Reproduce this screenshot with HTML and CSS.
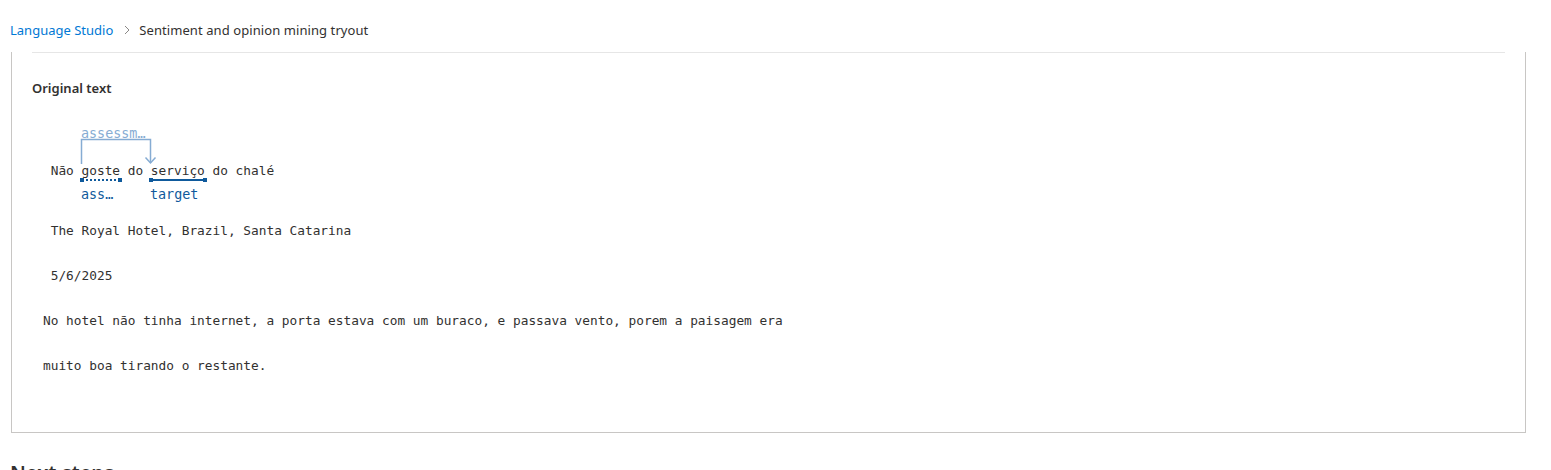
FILE: index.html
```html
<!DOCTYPE html>
<html lang="pt">
<head>
<meta charset="utf-8">
<title>Sentiment and opinion mining tryout</title>
<link rel="stylesheet" href="styles.css">
</head>
<body>
  <nav class="breadcrumb">
    <a class="crumb-link" href="#">Language Studio</a>
    <svg class="crumb-sep" width="12" height="12" viewBox="0 0 12 12"><path d="M4 2 L8 6 L4 10" fill="none" stroke="#8a8886" stroke-width="1"/></svg>
    <span class="crumb-current">Sentiment and opinion mining tryout</span>
  </nav>

  <section class="result-box">
    <div class="rule"></div>
    <h3 class="section-title">Original text</h3>
    <div class="text-block">
      <div class="annot-row">
        <span class="annot-top">assessm…</span>
        <svg class="annot-svg" width="200" height="88" viewBox="0 0 200 88">
          <path d="M38.5 44 V19.5 H107.5 V43" fill="none" stroke="#86acd3" stroke-width="1.5"/>
          <path d="M102.5 37.5 L107.5 43 L112.5 37.5" fill="none" stroke="#86acd3" stroke-width="1.5"/>
          <line x1="39" y1="60" x2="77" y2="60" stroke="#0f5a9c" stroke-width="2" stroke-dasharray="2 2"/>
          <rect x="37" y="58" width="4" height="4" fill="#0f5a9c"/>
          <rect x="75" y="58" width="4" height="4" fill="#0f5a9c"/>
          <line x1="108" y1="60" x2="162" y2="60" stroke="#0f5a9c" stroke-width="2"/>
          <rect x="106" y="58" width="4" height="4" fill="#0f5a9c"/>
          <rect x="160" y="58" width="4" height="4" fill="#0f5a9c"/>
        </svg>
        <div class="mono-line"> Não goste do serviço do chalé</div>
        <span class="annot-bottom label-a">ass…</span>
        <span class="annot-bottom label-b">target</span>
      </div>
      <div class="mono-line plain"> The Royal Hotel, Brazil, Santa Catarina</div>
      <div class="mono-line plain"> 5/6/2025</div>
      <div class="mono-line plain">No hotel não tinha internet, a porta estava com um buraco, e passava vento, porem a paisagem era</div>
      <div class="mono-line plain">muito boa tirando o restante.</div>
    </div>
  </section>

  <h2 class="next-title">Next steps</h2>
</body>
</html>
```

FILE: styles.css
```css
html, body {
  margin: 0;
  padding: 0;
  background: #ffffff;
  overflow: hidden;
}
body {
  font-family: "Noto Sans", "Open Sans", sans-serif;
  color: #323130;
  width: 1551px;
  height: 470px;
}
.breadcrumb {
  display: flex;
  align-items: center;
  height: 20px;
  padding: 20px 0 8px 10px;
  font-size: 13px;
}
.crumb-link {
  color: #0078d4;
  text-decoration: none;
}
.crumb-sep {
  margin: 0 6px 0 8px;
}
.crumb-current {
  color: #323130;
  letter-spacing: 0.08px;
}
.result-box {
  margin-left: 11px;
  width: 1513px;
  border: 1px solid #c8c6c4;
  border-top: none;
  padding: 0 0 44px 0;
}
.rule {
  height: 1px;
  background: #e6e6e6;
  margin: 4px 20px 0 20px;
}
.section-title {
  margin: 26px 0 0 20px;
  font-size: 13px;
  line-height: 18px;
  font-weight: 600;
  color: #323130;
}
.text-block {
  margin-top: 23px;
  padding-left: 31px;
  font-family: "DejaVu Sans Mono", "Liberation Mono", monospace;
  font-size: 12.8px;
  color: #323130;
}
.mono-line {
  white-space: pre;
  line-height: 18px;
}
.mono-line.plain {
  line-height: 45px;
}
.annot-row {
  position: relative;
  height: 88px;
  box-sizing: border-box;
  padding-top: 42px;
}
.annot-svg {
  position: absolute;
  left: 0;
  top: 0;
}
.annot-top {
  position: absolute;
  left: 38px;
  top: 5px;
  line-height: 18px;
  font-size: 13.4px;
  color: #86acd3;
}
.annot-bottom {
  position: absolute;
  top: 66px;
  line-height: 18px;
  font-size: 13.4px;
  color: #0f5a9c;
}
.label-a { left: 38px; }
.label-b { left: 107px; }
.next-title {
  margin: 26px 0 0 10px;
  font-size: 20px;
  font-weight: 600;
  color: #323130;
}
```
